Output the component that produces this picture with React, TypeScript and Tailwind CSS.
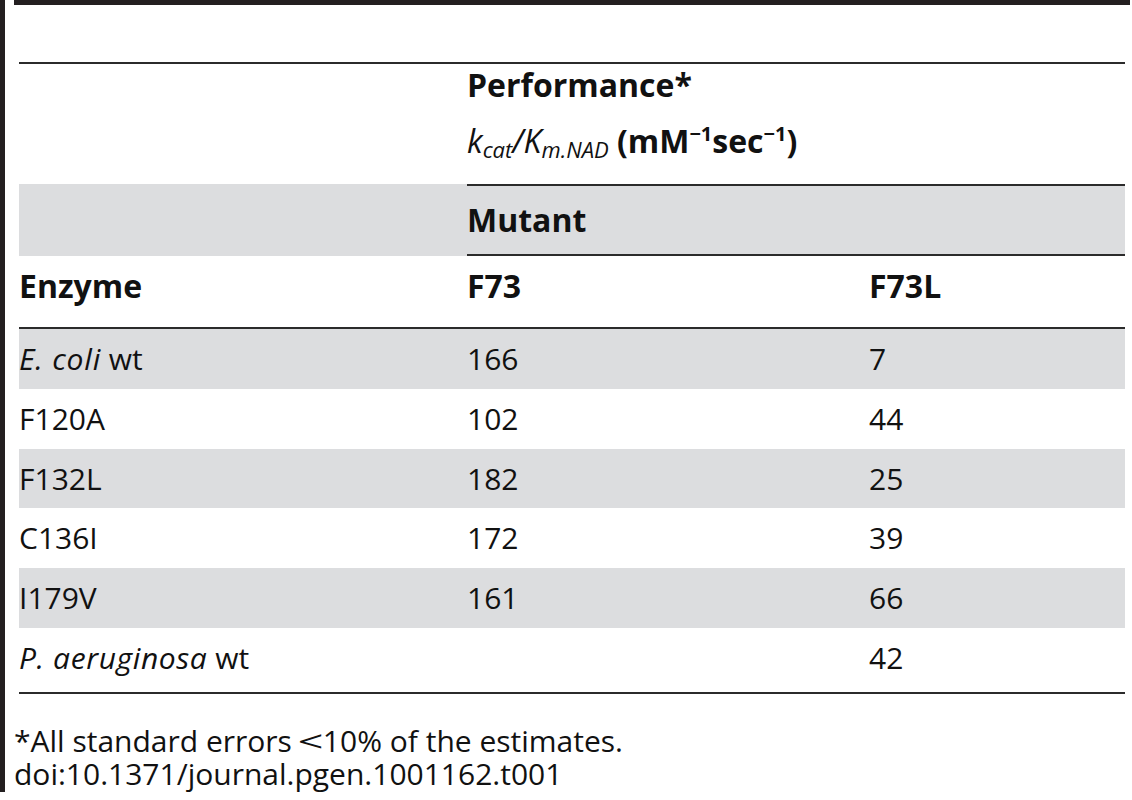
import React from "react";

type Row = {
  enzyme: React.ReactNode;
  f73: string;
  f73l: string;
  shaded: boolean;
  height: string;
};

const rows: Row[] = [
  {
    enzyme: (
      <>
        <i className="tracking-[0.8px]">E. coli</i> wt
      </>
    ),
    f73: "166",
    f73l: "7",
    shaded: true,
    height: "h-[60px]",
  },
  { enzyme: "F120A", f73: "102", f73l: "44", shaded: false, height: "h-[60px]" },
  { enzyme: "F132L", f73: "182", f73l: "25", shaded: true, height: "h-[59px]" },
  { enzyme: "C136I", f73: "172", f73l: "39", shaded: false, height: "h-[60px]" },
  { enzyme: "I179V", f73: "161", f73l: "66", shaded: true, height: "h-[60px]" },
  {
    enzyme: (
      <>
        <i className="tracking-[0.6px]">P. aeruginosa</i> wt
      </>
    ),
    f73: "",
    f73l: "42",
    shaded: false,
    height: "h-[64px] pb-[4px]",
  },
];

const cols = "grid grid-cols-[448px_402px_1fr]";

export default function App() {
  return (
    <div
      className="flex w-[1132px] h-[800px] bg-white text-[#111] text-[30px] leading-none"
      style={{ fontFamily: '"Open Sans", "Liberation Sans", sans-serif' }}
    >
      {/* left rule */}
      <div className="w-[5px] h-[792px] bg-[#231f20] shrink-0" />

      <div className="flex flex-col flex-1 pl-[9px]">
        {/* top rule */}
        <div className="h-[5px] w-[1116px] bg-[#231f20]" />

        <div className="ml-[5px] mt-[57px] w-[1106px]">
          <div className="h-[2px] bg-[#2b2b2b]" />

          {/* Performance header */}
          <div className="grid grid-cols-[448px_1fr] h-[120px]">
            <div />
            <div className="pt-[5px] text-[32px] font-bold">
              <div className="h-[32px]">Performance*</div>
              <div className="mt-[24px] h-[32px] whitespace-nowrap">
                <span className="italic font-normal">
                  k<sub className="text-[22px] bottom-[-5px]">cat</sub>/K
                  <sub className="text-[22px] bottom-[-5px]">m.NAD</sub>
                </span>{" "}
                (mM<sup className="text-[20px] top-[-12px]">&minus;1</sup>sec
                <sup className="text-[20px] top-[-12px]">&minus;1</sup>)
              </div>
            </div>
          </div>

          {/* Mutant band */}
          <div className="grid grid-cols-[448px_1fr] bg-[#dcdddf]">
            <div />
            <div className="h-[2px] bg-[#2b2b2b]" />
          </div>
          <div className="grid grid-cols-[448px_1fr] h-[68px] bg-[#dcdddf] text-[32px] font-bold">
            <div />
            <div className="flex items-center">Mutant</div>
          </div>
          <div className="grid grid-cols-[448px_1fr] bg-[#dcdddf]">
            <div />
            <div className="h-[2px] bg-[#2b2b2b]" />
          </div>

          {/* column headings */}
          <div className={`${cols} h-[71px] pt-[14px] text-[32px] font-bold`}>
            <div>Enzyme</div>
            <div>F73</div>
            <div>F73L</div>
          </div>
          <div className="h-[2px] bg-[#2b2b2b]" />

          {/* body */}
          {rows.map((r, i) => (
            <div
              key={i}
              className={`${cols} items-center ${r.height} ${
                r.shaded ? "bg-[#dcdddf]" : ""
              }`}
            >
              <div>{r.enzyme}</div>
              <div>{r.f73}</div>
              <div>{r.f73l}</div>
            </div>
          ))}
          <div className="h-[2px] bg-[#2b2b2b]" />
        </div>

        {/* footnotes */}
        <div className="mt-[30px] leading-[33px]">
          <div className="whitespace-nowrap">
            *All standard errors{" "}
            <span className="inline-block scale-x-150 ml-[2px] mr-[4px]">&lt;</span>
            10% of the estimates.
          </div>
          <div>doi:10.1371/journal.pgen.1001162.t001</div>
        </div>
      </div>
    </div>
  );
}
